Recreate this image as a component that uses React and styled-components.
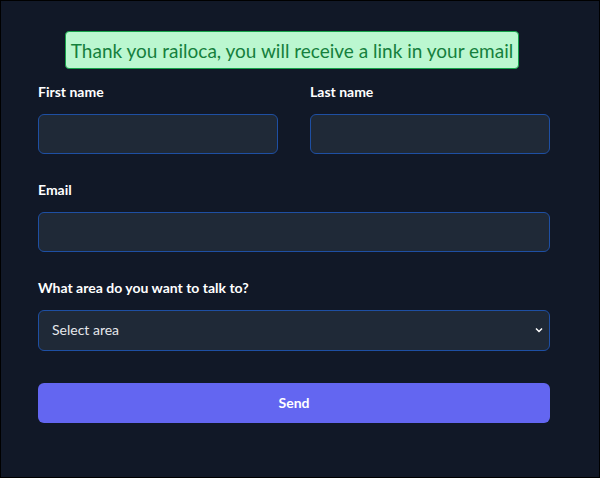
import React from 'react';
import styled, { createGlobalStyle } from 'styled-components';

const Global = createGlobalStyle`
  html, body { margin: 0; padding: 0; }
  body {
    background: #111827;
    font-family: Lato, "Noto Sans", sans-serif;
  }
  * { box-sizing: border-box; }
`;

const Page = styled.div`
  width: 600px;
  height: 478px;
  border: 1px solid #000;
  background: #111827;
  padding: 30px 0 0 37px;
`;

const Form = styled.form`
  width: 512px;
  display: flex;
  flex-direction: column;
`;

const Alert = styled.div`
  align-self: center;
  margin-right: 4px;
  padding: 0 5px;
  height: 38px;
  display: flex;
  align-items: center;
  background: #bbf7d0;
  border: 1px solid #16a34a;
  border-radius: 4px;
  color: #15803d;
  font-size: 19px;
`;

const Row = styled.div`
  display: grid;
  grid-template-columns: ${p => (p.cols === 2 ? '1fr 1fr' : '1fr')};
  column-gap: 32px;
  margin-top: ${p => p.top}px;
`;

const Field = styled.div`
  display: flex;
  flex-direction: column;
`;

const Label = styled.label`
  color: #fff;
  font-weight: 700;
  font-size: 14px;
  line-height: 20px;
  margin-bottom: 12px;
`;

const Input = styled.input`
  height: 40px;
  background: #1f2937;
  border: 1px solid #1e4fa3;
  border-radius: 6px;
  color: #fff;
  padding: 0 13px;
  font: inherit;
  font-size: 14px;
  outline: none;
`;

const SelectBox = styled.div`
  position: relative;
  height: 41px;
  background: #1f2937;
  border: 1px solid #1e4fa3;
  border-radius: 6px;
  color: #e5e7eb;
  font-size: 14px;
  display: flex;
  align-items: center;
  padding: 0 13px 2px;
`;

const Chevron = styled.svg`
  position: absolute;
  right: 5px;
  top: 14px;
`;

const Button = styled.button`
  margin-top: 32px;
  height: 40px;
  border: none;
  border-radius: 6px;
  background: #6366f1;
  color: #fff;
  font: inherit;
  font-weight: 700;
  font-size: 14px;
  padding-bottom: 2px;
`;

export default function App() {
  return (
    <>
      <Global />
      <Page>
        <Form onSubmit={e => e.preventDefault()}>
          <Alert>Thank you railoca, you will receive a link in your email</Alert>
          <Row cols={2} top={13}>
            <Field>
              <Label>First name</Label>
              <Input />
            </Field>
            <Field>
              <Label>Last name</Label>
              <Input />
            </Field>
          </Row>
          <Row top={26}>
            <Field>
              <Label>Email</Label>
              <Input />
            </Field>
          </Row>
          <Row top={26}>
            <Field>
              <Label>What area do you want to talk to?</Label>
              <SelectBox>
                Select area
                <Chevron width="10" height="10" viewBox="0 0 10 10">
                  <path d="M2 3.5 L5 6.5 L8 3.5" fill="none" stroke="#fff" strokeWidth="1.5" />
                </Chevron>
              </SelectBox>
            </Field>
          </Row>
          <Button type="submit">Send</Button>
        </Form>
      </Page>
    </>
  );
}
